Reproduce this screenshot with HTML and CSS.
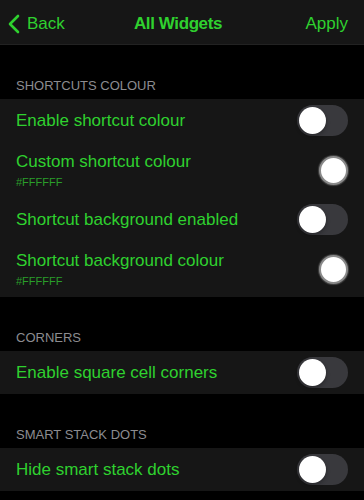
FILE: index.html
```html
<!DOCTYPE html>
<html>
<head>
<meta charset="utf-8">
<link rel="stylesheet" href="styles.css">
</head>
<body>
<div class="nav">
  <div class="nav-left">
    <svg class="chev" width="12" height="20" viewBox="0 0 12 20"><path d="M10 2 L2 10 L10 18" fill="none" stroke="#2fd12f" stroke-width="2.6" stroke-linecap="round" stroke-linejoin="round"/></svg>
    <span>Back</span>
  </div>
  <div class="nav-title">All Widgets</div>
  <div class="nav-right">Apply</div>
</div>

<div class="section-header">SHORTCUTS COLOUR</div>
<div class="card">
  <div class="row">
    <div class="label">Enable shortcut colour</div>
    <div class="toggle"><div class="knob"></div></div>
  </div>
  <div class="row tall">
    <div class="texts">
      <div class="label">Custom shortcut colour</div>
      <div class="sub">#FFFFFF</div>
    </div>
    <div class="swatch"></div>
  </div>
  <div class="row">
    <div class="label">Shortcut background enabled</div>
    <div class="toggle"><div class="knob"></div></div>
  </div>
  <div class="row tall">
    <div class="texts">
      <div class="label">Shortcut background colour</div>
      <div class="sub">#FFFFFF</div>
    </div>
    <div class="swatch"></div>
  </div>
</div>

<div class="section-header">CORNERS</div>
<div class="card">
  <div class="row">
    <div class="label">Enable square cell corners</div>
    <div class="toggle"><div class="knob"></div></div>
  </div>
</div>

<div class="section-header">SMART STACK DOTS</div>
<div class="card">
  <div class="row">
    <div class="label">Hide smart stack dots</div>
    <div class="toggle"><div class="knob"></div></div>
  </div>
</div>
</body>
</html>
```

FILE: styles.css
```css
html, body {
  margin: 0;
  padding: 0;
  background: #000;
  font-family: "Liberation Sans", Arial, sans-serif;
}
body {
  width: 364px;
  height: 500px;
  overflow: hidden;
}
.nav {
  height: 45px;
  background: #161616;
  border-bottom: 1px solid #222;
  box-sizing: border-box;
  display: grid;
  grid-template-columns: 1fr auto 1fr;
  align-items: center;
  padding: 4px 16px 0 8px;
  color: #2fd12f;
  font-size: 17px;
}
.nav-left {
  display: flex;
  align-items: center;
  gap: 7px;
}
.chev { display: block; }
.nav-title {
  font-weight: bold;
  text-align: center;
  letter-spacing: -0.4px;
}
.nav-right {
  text-align: right;
}
.section-header {
  color: #8c8c90;
  font-size: 13px;
  padding: 35px 16px 8px;
  line-height: 11px;
}
.card {
  background: #161616;
}
.row {
  height: 43px;
  display: flex;
  align-items: center;
  justify-content: space-between;
  padding: 0 16px;
}
.row.tall {
  height: 56px;
}
.label {
  color: #2fd12f;
  font-size: 17px;
}
.sub {
  color: #2a9e2a;
  font-size: 11px;
  margin-top: 4px;
}
.toggle {
  width: 51px;
  height: 31px;
  border-radius: 16px;
  background: #39393d;
  position: relative;
}
.knob {
  position: absolute;
  left: 2px;
  top: 2px;
  width: 27px;
  height: 27px;
  border-radius: 50%;
  background: #fff;
  box-shadow: 0 2px 4px rgba(0,0,0,0.3);
}
.swatch {
  width: 25px;
  height: 25px;
  border-radius: 50%;
  background: #fff;
  border: 2px solid #8a8a8a;
  box-shadow: 0 0 1px 1px rgba(140,140,140,0.4);
}
```
